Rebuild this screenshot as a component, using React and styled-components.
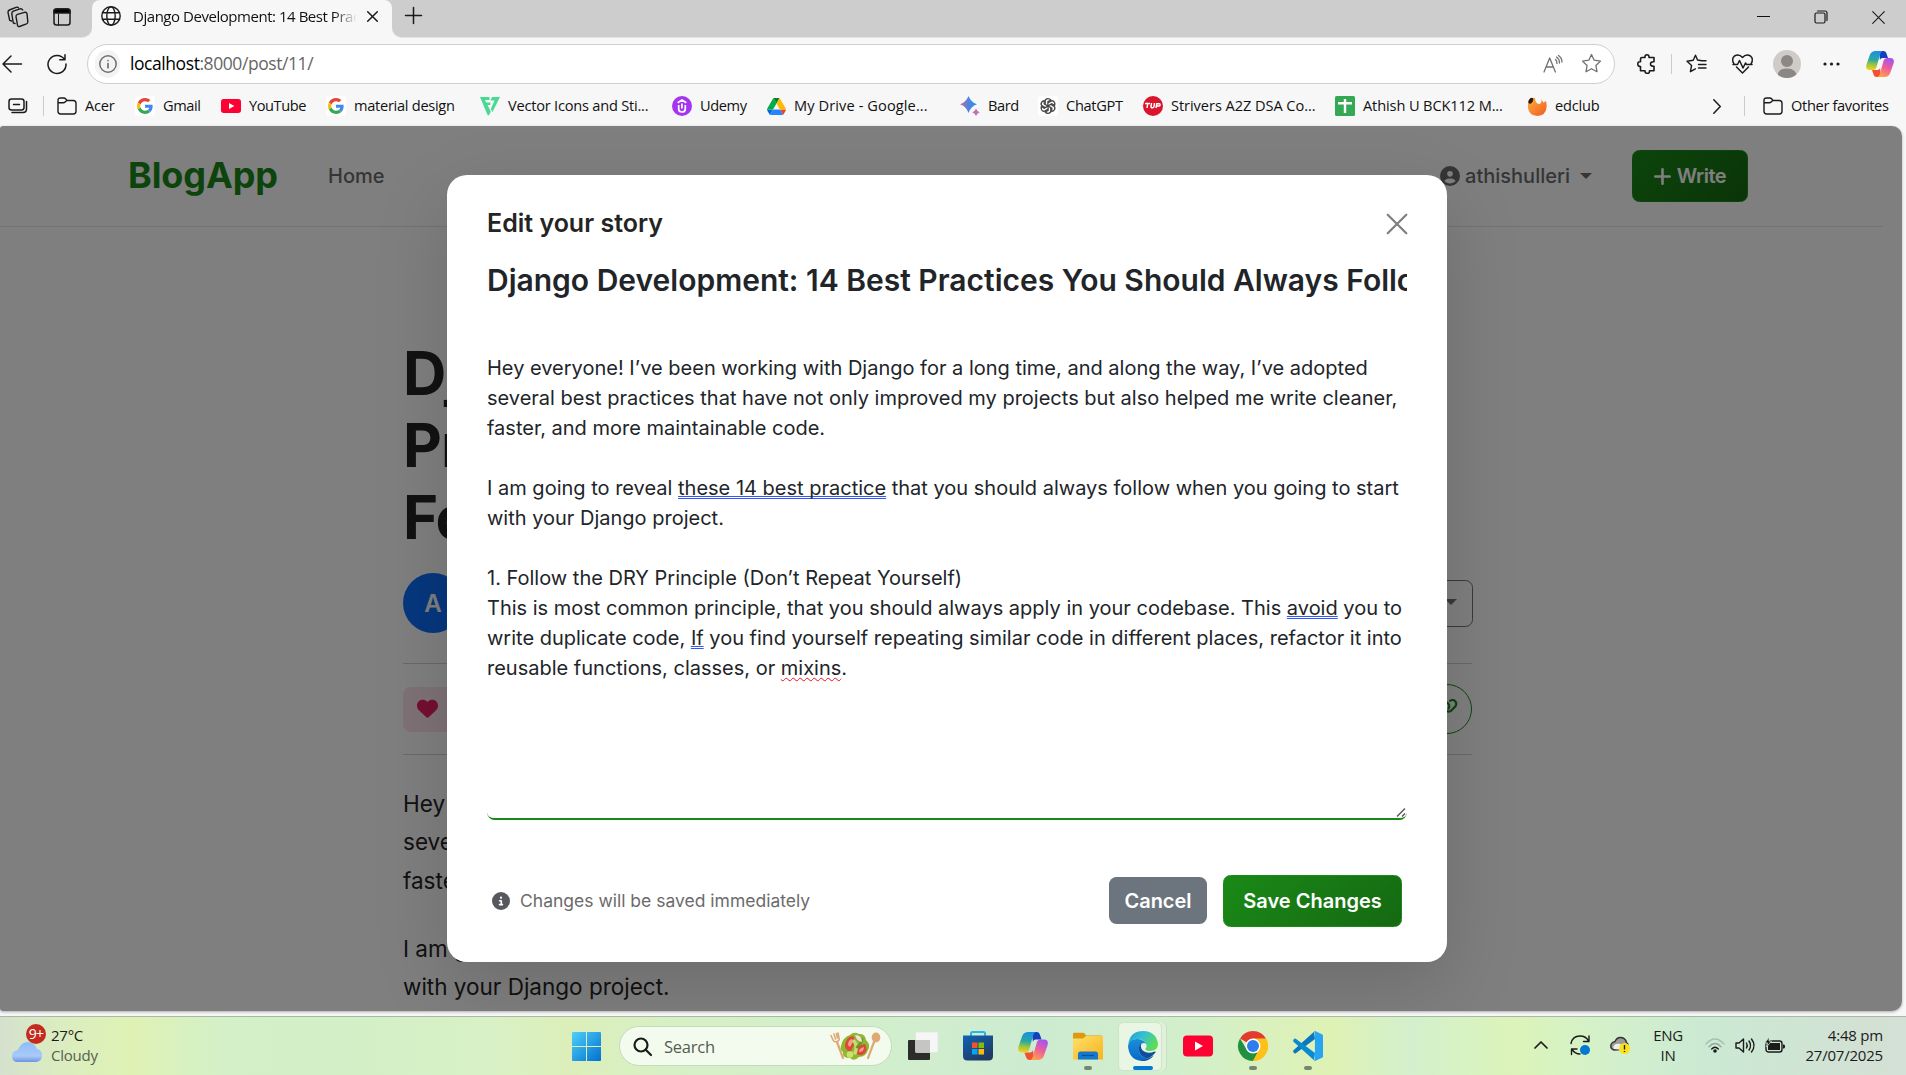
import React from "react";
import styled, { createGlobalStyle } from "styled-components";
import { FaCircleUser, FaHeart, FaLink, FaCircleInfo } from "react-icons/fa6";

const ui = `"Open Sans", "Noto Sans", sans-serif`;
const web = `Inter, "Liberation Sans", sans-serif`;

const GlobalStyle = createGlobalStyle`
  *, *::before, *::after { box-sizing: border-box; }
  html, body { margin: 0; padding: 0; overflow: hidden; }
  svg { display: block; flex: none; overflow: visible; }
  button { font: inherit; border: 0; margin: 0; padding: 0; }
  h1, h2, p { margin: 0; }
`;

/* ---------- window ---------- */
const Screen = styled.div`
  width: 1906px; height: 1075px; display: flex; flex-direction: column;
  background: #f7f7f7; font-family: ${ui}; color: #111; overflow: hidden;
`;
const TabStrip = styled.header`
  height: 38px; flex: none; display: flex; background: #cdcdcd;
`;
const StripLeft = styled.div`
  width: 92px; display: flex; align-items: center; gap: 24px; padding: 0 0 4px 7px;
  border-bottom-right-radius: 10px; background: #cdcdcd; border-bottom: 1px solid #e2e2e2;
`;
const TabWell = styled.div`
  flex: none; background: #f7f7f7; display: flex;
`;
const Tab = styled.div`
  width: 300px; height: 38px; display: flex; align-items: center; padding: 0 9px 6px 9px;
  background: #f7f7f7; border-radius: 8px 8px 0 0; box-shadow: 0 -8px 0 #cdcdcd;
`;
const TabTitle = styled.div`
  width: 226px; flex: none; margin: -1px 0 0 12px; font-size: 15px; letter-spacing: -0.46px; white-space: nowrap; overflow: hidden;
  mask-image: linear-gradient(90deg, #000 200px, transparent 224px);
`;
const StripRight = styled.div`
  flex: 1; display: flex; align-items: center; background: #cdcdcd; padding: 0 21px 6px 13px;
  border-bottom-left-radius: 10px; border-bottom: 1px solid #e2e2e2;
`;
const WindowButtons = styled.div`
  margin-left: auto; display: flex; gap: 44px; align-items: center; padding-top: 3px;
`;
const Back = styled.div`background: #f7f7f7; display: flex; flex: ${(p) => (p.$grow ? 1 : "none")};`;

const Toolbar = styled.div`
  height: 50px; flex: none; display: flex; align-items: center; padding-top: 1px;
`;
const Slot = styled.div`
  width: ${(p) => p.$w}px; flex: none; display: flex; justify-content: center; align-items: center;
`;
const Address = styled.div`
  width: 1528px; height: 40px; flex: none; display: flex; align-items: center; background: #fff;
  border: 1px solid #cfcfcf; border-radius: 20px; padding: 0 9px 0 7px;
`;
const InfoChip = styled.div`
  width: 25px; height: 28px; border-radius: 13px; background: #f3f3f3; display: flex; align-items: center; justify-content: center;
`;
const Url = styled.div`
  margin: -2px 0 0 10px; flex: 1; font-size: 17.5px; letter-spacing: -0.43px; color: #666; white-space: nowrap;
  b { font-weight: 400; color: #000; }
`;
const Divider = styled.i`
  display: block; width: 1px; height: 20px; background: #cbcbcb; flex: none;
`;
const Avatar = styled.div`
  width: 28px; height: 28px; flex: none; border-radius: 50%; overflow: hidden; background: #cfccc8;
`;
const Bookmarks = styled.nav`
  height: 38px; flex: none; display: flex; align-items: center; padding-bottom: 2px;
  font-size: 14.6px; letter-spacing: -0.4px; white-space: nowrap;
`;
const Bookmark = styled.div`
  width: ${(p) => p.$w}px; flex: none; display: flex; align-items: center; gap: 8px;
  span { letter-spacing: ${(p) => p.$ls ?? -0.4}px; margin-top: -2px; }
`;

/* ---------- page ---------- */
const ViewFrame = styled.main`
  height: 890px; flex: none; background: #f7f7f7; padding-right: 4px;
`;
const View = styled.div`
  position: relative; height: 885px; background: #fff; overflow: hidden; border-radius: 3px 10px 10px 3px;
  box-shadow: 0 1px 3px rgba(0,0,0,.3); font-family: ${web}; color: #242424;
`;
const NavBar = styled.div`
  width: 1883px; height: 101px; border-bottom: 1px solid #e6e6e6; display: flex; align-items: center;
  padding: 0 135px 0 128px; font-size: 20px; font-weight: 500; color: #6b6b6b;
`;
const Brand = styled.div`
  width: 200px; margin-top: -2px; font-size: 36px; font-weight: 700; letter-spacing: -0.1px; color: #1a8917;
`;
const UserMenu = styled.div`
  margin-left: auto; display: flex; align-items: center; gap: 5px;
`;
const Caret = styled.i`
  display: block; border: 6px solid transparent; border-top-color: currentColor; border-bottom: 0; margin-left: ${(p) => p.$ml || 0}px;
`;
const GreenButton = styled.button`
  width: ${(p) => p.$w}px; height: 52px; border-radius: 7.5px; border: 1px solid #1a8917;
  background: linear-gradient(135deg, #1a8917, #156912); color: #fff; font-weight: 600; font-size: 20px;
  letter-spacing: ${(p) => p.$ls || 0}px; margin-left: ${(p) => p.$ml || 0}px; white-space: nowrap;
  display: flex; align-items: center; justify-content: center; gap: 6px;
`;
const Article = styled.article`
  width: 1069px; margin: 110px 0 0 403px;
`;
const Headline = styled.h1`
  font-size: 60px; line-height: 72px; font-weight: 700; letter-spacing: -1px; color: #242424;
`;
const Byline = styled.div`
  margin-top: 20px; height: 60px; display: flex; justify-content: space-between; align-items: center;
`;
const Initial = styled.div`
  width: 60px; height: 60px; border-radius: 50%; background: #0d6efd; color: #fff; font-weight: 600; font-size: 24px;
  display: flex; align-items: center; justify-content: center;
`;
const MoreButton = styled.div`
  width: 71px; height: 47px; border: 1px solid #6c757d; border-radius: 7.5px; color: #6c757d;
  display: flex; align-items: center; justify-content: flex-end; padding-right: 15px; padding-bottom: 4px; margin: 1px -1px 0 0;
`;
const Actions = styled.div`
  margin-top: 30px; height: 92px; border-top: 1px solid #d2d2d2; border-bottom: 1px solid #d2d2d2;
  display: flex; align-items: center; justify-content: space-between;
`;
const Like = styled.div`
  width: 92px; height: 45px; border-radius: 7.5px; background: #fce4ec; color: #e91e63; padding-left: 14px;
  display: flex; align-items: center; padding-bottom: 1px;
`;
const Share = styled.div`
  width: 50px; height: 50px; border-radius: 50%; border: 1px solid #1a8917; color: #1a8917;
  display: flex; align-items: center; justify-content: center; padding-bottom: 4px;
`;
const Prose = styled.div`
  width: 1069px; margin-top: 30px; font-size: 22.5px; line-height: 38.25px;
  p { margin-bottom: 30px; }
`;
const Backdrop = styled.div`
  position: absolute; inset: 0; background: rgba(0,0,0,.5); padding-top: 49px; display: flex; justify-content: center;
  align-items: flex-start; padding-right: 8px;
`;
const Dialog = styled.section`
  width: 1000px; height: 787px; background: #fff; border-radius: 20px; box-shadow: 0 25px 75px rgba(0,0,0,.15);
  padding: 0 40px; display: flex; flex-direction: column;
`;
const DialogHead = styled.div`
  height: 67px; padding-top: 30px; display: flex; align-items: center; justify-content: space-between;
`;
const DialogTitle = styled.h2`
  margin-top: -2px; font-size: 25px; line-height: 38px; font-weight: 600; color: #242424;
`;
const TitleField = styled.div`
  height: 45px; margin-top: 16px; font-size: 30px; line-height: 45px; font-weight: 600; color: #212529; white-space: nowrap; overflow: hidden;
`;
const StoryField = styled.div`
  position: relative; height: 502px; margin-top: 15px; padding-top: 35px; border: solid transparent; border-width: 0 0 2px; border-bottom-color: #1a8917;
  border-radius: 7.5px; font-size: 20px; line-height: 30px; color: #212529; white-space: pre;
`;
const Grammar = styled.span`
  text-decoration: underline double #3355ff 1px; text-underline-offset: 1px; text-decoration-skip-ink: none;
`;
const Spelling = styled.span`
  text-decoration: underline wavy #e81123 1.4px; text-underline-offset: 2px; text-decoration-skip-ink: none;
`;
const Grip = styled.svg`position: absolute; right: 1px; bottom: 0;`;
const DialogFoot = styled.div`
  height: 52px; margin-top: 55px; padding: 0 5px; display: flex; align-items: center;
`;
const Note = styled.div`
  flex: 1; display: flex; align-items: center; gap: 10px; font-size: 17.5px; color: #6b6b6b; margin-top: -1px;
  svg { color: #55595d; }
`;
const CancelButton = styled.button`
  width: 98px; height: 47px; margin-top: -1px; border-radius: 7.5px; background: #6c757d; color: #fff; font-size: 20px; font-weight: 600;
`;

/* ---------- taskbar ---------- */
const Taskbar = styled.footer`
  height: 59px; flex: none; border-top: 1px solid #a9b8a2; display: flex; align-items: center; color: #1b1b1b; font-size: 15px;
  background: linear-gradient(90deg, #d5e1ce 0, #dbedc0 60px, #dff2b4 130px, #d3f0c8 225px, #d2efc7 330px, #d8f1c6 480px, #dcefba 570px,
    #d6f0c6 680px, #d2efcc 850px, #cdebd0 1040px, #d2efcc 1180px, #dff2b4 1330px, #d3f0cd 1410px, #dcf4b9 1515px, #d3f0cb 1610px, #cbe9d3 1710px, #d2e1d4 1860px, #d4e0d5 1906px);
`;
const Weather = styled.div`
  width: 572px; padding-left: 12px; display: flex; align-items: center; gap: 9px; line-height: 20px; letter-spacing: -0.25px; padding-bottom: 2px;
`;
const Muted = styled.div`color: #55604f;`;
const WeatherIcon = styled.div`position: relative; width: 30px; height: 38px; padding-top: 16px;`;
const Badge = styled.div`
  position: absolute; left: 14px; top: -2px; width: 20px; height: 20px; border-radius: 50%; background: #c42b1c; color: #fff;
  font-size: 14px; line-height: 19px; text-align: center; letter-spacing: -0.8px;
`;
const SearchBox = styled.div`
  width: 273px; height: 40px; margin: 0 3px 0 18px; border-radius: 20px; background: #f3fbef; border: 1px solid #c3dcba; display: flex; align-items: center;
  padding: 0 10px 0 13px; font-size: 16.5px; color: #555b52; letter-spacing: -0.25px;
  span { flex: 1; margin-left: 12px; }
`;
const Pinned = styled.div`
  width: 55px; height: 58px; position: relative; display: flex; align-items: center; justify-content: center;
`;
const PinnedIcon = styled.div`position: relative;`;
const Dot = styled.i`
  position: absolute; bottom: 5px; width: ${(p) => (p.$on ? 20 : 8)}px; height: 4px; border-radius: 2px; background: ${(p) => (p.$on ? "#0078d4" : "#76876f")};
`;
const ActiveBack = styled.div`
  position: absolute; left: 3px; top: 5px; width: 44px; height: 49px; border-radius: 5px; background: #e8f6e3; border: 1px solid #cfe3ca; box-shadow: 4px 0 0 #dff1d9, 5px 0 0 #c9dfc3;
`;
const Tray = styled.div`
  flex: 1; display: flex; align-items: center; justify-content: flex-end; padding-right: 23px; padding-bottom: 2px;
`;
const TwoLine = styled.div`
  width: ${(p) => p.$w}px; line-height: 20px; text-align: ${(p) => p.$a}; letter-spacing: ${(p) => p.$ls}px; white-space: nowrap; margin-top: -1px;
`;

/* ---------- drawings ---------- */
const line = { fill: "none", stroke: "#1b1b1b", strokeWidth: 1.5, strokeLinecap: "round", strokeLinejoin: "round" };

const Workspaces = () => (
  <svg width="22" height="22" viewBox="0 0 22 22" {...line} strokeWidth="1.4">
    <path d="M10.500 8.300 17.500 6.300q2-.5 2.500 1.300l.8 8q.2 1.700-1.300 2.300l-7 2.600q-1.700.5-2-1.300L9 10.600Q8.800 8.900 10.500 8.300Z" />
    <path d="M8 17.500 6.300 17 4.800 8Q4.700 6 6.300 5.200L13 2.800q1.800-.5 2.700 1.200M4.500 15 2.700 14.300 1 6.700Q.8 4.800 2.400 4L9 1.300q1.600-.5 2.500.4" />
  </svg>
);
const VerticalTabs = () => (
  <svg width="18" height="18" viewBox="0 0 18 18" {...line}>
    <rect x="1" y="1" width="16" height="16" rx="2.500" /><path d="M1 5V3.500Q1 1 3.500 1h11Q17 1 17 3.500V5Z" fill="#000" /><path d="M5.500 6v11" strokeWidth="1" />
  </svg>
);
const Globe = () => (
  <svg width="20" height="20" viewBox="0 0 20 20" {...line} strokeWidth="1.4">
    <circle cx="10" cy="10" r="9.200" /><ellipse cx="10" cy="10" rx="4.200" ry="9.200" /><path d="M1.500 6.800h17M1.500 13.200h17" />
  </svg>
);
const Cross = ({ s = 11, c = "#1b1b1b", w = 1.5 }) => (
  <svg width={s} height={s} viewBox={`0 0 ${s} ${s}`} stroke={c} strokeWidth={w} strokeLinecap="round"><path d={`M.7 .7 ${s - 0.7} ${s - 0.7}M${s - 0.7} .7 .7 ${s - 0.7}`} /></svg>
);
const Plus = () => (
  <svg width="17" height="17" viewBox="0 0 17 17" stroke="currentColor" strokeWidth="2.600" strokeLinecap="round"><path d="M8.500 1.300v14.400M1.300 8.500h14.400" /></svg>
);
const Folder = () => (
  <svg width="20" height="20" viewBox="0 0 20 20" {...line} strokeWidth="1.4">
    <path d="M1 4.500Q1 2 3.500 2h3Q8 2 8.800 3l1.400 1.500h6Q19 4.500 19 7.300v8Q19 18 16.300 18H3.700Q1 18 1 15.300Z M1 6.800h5.400q1 0 1.700-.7L9.800 4.500" />
  </svg>
);
const Google = () => (
  <svg width="20" height="20" viewBox="0 0 20 20"><rect width="20" height="20" rx="3" fill="#fff" />
    <g transform="translate(2 2) scale(.333)">
      <path fill="#ea4335" d="M24 9.500c3.540 0 6.710 1.220 9.210 3.600l6.850-6.850C35.900 2.380 30.470 0 24 0 14.620 0 6.510 5.380 2.560 13.220l7.980 6.190C12.430 13.720 17.740 9.500 24 9.500z" />
      <path fill="#4285f4" d="M46.980 24.550c0-1.570-.15-3.090-.38-4.550H24v9.020h12.940c-.58 2.960-2.260 5.480-4.780 7.180l7.730 6c4.510-4.180 7.090-10.360 7.090-17.650z" />
      <path fill="#fbbc05" d="M10.530 28.590c-.48-1.450-.76-2.990-.76-4.590s.27-3.140.76-4.590l-7.980-6.190C.92 16.460 0 20.120 0 24c0 3.880.92 7.540 2.560 10.780l7.970-6.190z" />
      <path fill="#34a853" d="M24 48c6.480 0 11.930-2.130 15.890-5.810l-7.730-6c-2.150 1.450-4.920 2.300-8.160 2.300-6.260 0-11.570-4.220-13.470-9.910l-7.980 6.190C6.510 42.620 14.620 48 24 48z" />
    </g>
  </svg>
);
const YouTube = ({ w = 20, h = 14 }) => (
  <svg width={w} height={h} viewBox="0 0 30 21"><rect width="30" height="21" rx="4" fill="#ff0033" /><path d="M12 6v9l8-4.500Z" fill="#fff" /></svg>
);
const VectorMark = () => (
  <svg width="20" height="20" viewBox="0 0 20 20" fill="#49d993"><path d="M0 1h9.500v3H5l1.300 2.500h4V9H7.500l3.300 6.500-1.300 3L8 19.500Q7 18 6.500 16.500ZM12 1h8l-7.500 15-1.700-3 3.700-8.500h-4Z" /></svg>
);
const Udemy = () => (
  <svg width="20" height="20" viewBox="0 0 20 20"><circle cx="10" cy="10" r="10" fill="#a435f0" />
    <path d="M6.700 9v4q0 3 3.300 3t3.300-3V9M5.700 6.800 10 4l4.300 2.800M9.900 7.500v5" fill="none" stroke="#fff" strokeWidth="1.700" /></svg>
);
const Drive = () => (
  <svg width="19" height="17" viewBox="0 0 87.300 78">
    <path d="m6.600 66.850 3.850 6.650c.8 1.400 1.950 2.500 3.300 3.300l13.750-23.800h-27.500c0 1.550.4 3.100 1.200 4.500z" fill="#0066da" />
    <path d="m43.650 25-13.750-23.800c-1.350.8-2.500 1.900-3.300 3.300l-25.400 44a9.060 9.060 0 0 0 -1.200 4.500h27.500z" fill="#00ac47" />
    <path d="m73.550 76.800c1.350-.8 2.500-1.900 3.300-3.300l1.600-2.750 7.650-13.250c.8-1.400 1.200-2.950 1.200-4.500h-27.502l5.852 11.500z" fill="#ea4335" />
    <path d="m43.650 25 13.750-23.800c-1.350-.8-2.900-1.200-4.500-1.200h-18.500c-1.600 0-3.150.45-4.500 1.200z" fill="#00832d" />
    <path d="m59.800 53h-32.300l-13.750 23.800c1.350.8 2.900 1.200 4.500 1.200h50.800c1.600 0 3.150-.45 4.500-1.200z" fill="#2684fc" />
    <path d="m73.400 26.500-12.700-22c-.8-1.400-1.950-2.500-3.300-3.300l-13.750 23.800 16.150 28h27.450c0-1.550-.4-3.100-1.200-4.500z" fill="#ffba00" />
  </svg>
);
const Bard = () => (
  <svg width="20" height="20" viewBox="0 0 20 20">
    <defs><linearGradient id="bard" x1="0" y1="0" x2="1" y2="0"><stop offset="0" stopColor="#d6668a" /><stop offset=".5" stopColor="#4a86e0" /><stop offset="1" stopColor="#3b8be8" /></linearGradient></defs>
    <path d="M8.500 0Q10.800 6 17 8.300 10.800 10.500 8.500 17 6.200 10.500 0 8.300 6.200 6 8.500 0Z" fill="url(#bard)" /><path d="M16 12.500q.9 2.700 3.700 3.700-2.800 1-3.700 3.800-.9-2.800-3.700-3.800 2.800-1 3.700-3.700Z" fill="#c070b0" />
  </svg>
);
const ChatGPT = () => (
  <svg width="20" height="20" viewBox="0 0 20 20"><rect width="20" height="20" rx="3" fill="#fff" />
    <g fill="none" stroke="#444" strokeWidth="1.300" transform="translate(10 10)">
      {[0, 60, 120, 180, 240, 300].map((a) => <path key={a} transform={`rotate(${a})`} d="M-2.800-1.700V-5Q-2.600-7.400 0-7.400 1.800-7.400 2.800-6L-.1-4.300V.3" />)}
    </g></svg>
);
const Striver = () => (
  <svg width="20" height="20" viewBox="0 0 20 20"><circle cx="10" cy="10" r="10" fill="#d9142d" />
    <g fill="none" stroke="#fff" strokeWidth="1.500"><path d="M2 7.500h5M4.700 7.500 4 12M8.500 7 8 10.500q0 1.500 1.500 1.300 1.300 0 1.500-1.300L11.500 7M13 12l.8-4.300h2.500q1 .2.800 1.300-.3 1-1.300 1h-2" /></g></svg>
);
const Sheets = () => (
  <svg width="20" height="20" viewBox="0 0 20 20"><rect width="20" height="20" rx="1.500" fill="#34a853" /><path d="M3 7.300h14M10 3v14" stroke="#fff" strokeWidth="2.400" /></svg>
);
const Edclub = () => (
  <svg width="20" height="20" viewBox="0 0 20 20">
    <defs><linearGradient id="edc" x1="0" y1="0" x2="1" y2="1"><stop offset="0" stopColor="#fbb03b" /><stop offset="1" stopColor="#f15a24" /></linearGradient></defs>
    <path d="M2 4q3-3 6-2 .5 6 4.500 6 2.500-1 2-5 1 3 2 3.500L19 5q1 4 .5 7-1 7.500-9 8Q2 19.500 1 12 .5 8 2 4Z" fill="url(#edc)" /><ellipse cx="3.800" cy="4.800" rx="2" ry="3.200" transform="rotate(30 3.800 4.800)" fill="#2c1a12" /></svg>
);
const Copilot = ({ s = 28 }) => (
  <svg width={s} height={s} viewBox="0 0 28 28">
    <defs>
      <linearGradient id="cpa" x1=".4" y1="0" x2=".3" y2="1"><stop offset="0" stopColor="#1b8fe8" /><stop offset=".45" stopColor="#2aa8a0" /><stop offset=".75" stopColor="#a8c838" /><stop offset="1" stopColor="#f5d020" /></linearGradient>
      <linearGradient id="cpb" x1=".7" y1="0" x2=".3" y2="1"><stop offset="0" stopColor="#a552f0" /><stop offset=".5" stopColor="#ee5f9a" /><stop offset="1" stopColor="#ffa04a" /></linearGradient>
    </defs>
    <path d="M13 1h4.500Q19.600 1 20.300 3l1.700 5h-5.500q-2 0-2.600 2Z" fill="#1440c0" />
    <path d="M15 27h-4.500Q8.400 27 7.700 25L6 20h5.500q2 0 2.600-2Z" fill="#f0522f" />
    <path d="M9.500 1H17q-2 .3-2.700 2.600L10.500 17q-.8 3-3.700 3H4Q-.8 20 .3 15L4 4.500Q5.500 1 9.500 1Z" fill="url(#cpa)" />
    <path d="M18.500 27H11q2-.3 2.700-2.600L17.500 11q.8-3 3.700-3H24q4.800 0 3.700 5L24 23.500Q22.500 27 18.500 27Z" fill="url(#cpb)" />
  </svg>
);
const Star = ({ c = "#1b1b1b" }) => (
  <svg width="21" height="21" viewBox="0 0 21 21" {...line} stroke={c} strokeWidth="1.300"><path d="m10.500 1.500 2.700 5.700 6.300.9-4.600 4.400 1.100 6.200-5.500-3-5.500 3 1.100-6.200L1.500 8.100l6.300-.9Z" /></svg>
);
const Salad = () => (
  <svg width="51" height="28" viewBox="0 0 51 28">
    <g fill="none" stroke="#dfa973" strokeLinecap="round"><path d="M7 10 13 26" strokeWidth="2.200" /><path d="M44 10 38 26" strokeWidth="2.200" /><path d="M1 3.500 3 8q1 2.500 4 1.500T9 6L8 1M4 2l1.500 5M6.500 1.500 7.500 6" strokeWidth="1.600" /></g>
    <ellipse cx="46" cy="5.500" rx="4.300" ry="5" fill="#dfa973" />
    <path d="M11 14Q13 5 20 3 24-1 29 2q6-1 7 6 5 5 2 10-2 7-9 7-5 5-9 1-8 0-7-6-3-2-2-6Z" fill="#8fb82f" />
    <path d="M15 15Q15 5 23 4l3 5-5 10q-4 1-6-4Z" fill="#dc4a3a" /><path d="M27 22q-2-3 1-8l7-2q3 5 0 9-4 4-8 1Z" fill="#dc4a3a" /><path d="M18 13q0-5 4-6l1 3-3 5Z" fill="#f2a18c" /><path d="M29 20q0-4 5-5 0 5-5 5Z" fill="#f2a18c" />
    <path d="M24 9q4 5 1 12" stroke="#c3de74" strokeWidth="3.500" fill="none" strokeLinecap="round" /><path d="M32 7q0 4-5 8" stroke="#6d9a1e" strokeWidth="2.500" fill="none" strokeLinecap="round" /><path d="M25 3q7 0 7 7-5 0-7-7Z" fill="#f0dfe8" /><circle cx="20" cy="22.500" r="3.300" fill="#c9e36d" />
  </svg>
);
const Edge = () => (
  <svg width="30" height="30" viewBox="0 0 30 30">
    <defs><linearGradient id="eg1" x1="0" y1="0" x2="1" y2=".5"><stop offset="0" stopColor="#1a9fdc" /><stop offset=".5" stopColor="#35c1d0" /><stop offset="1" stopColor="#5ddc56" /></linearGradient>
      <linearGradient id="eg2" x1="0" y1="0" x2="0" y2="1"><stop offset="0" stopColor="#1b8ed8" /><stop offset="1" stopColor="#0869c6" /></linearGradient></defs>
    <path d="M.3 13Q2 0 15.500 0 28 .5 30 12.500 30 20 22 20q-5 0-4.500-2.500 1.700-1.500.8-4Q16 8 10 8 3 8 .3 13Z" fill="url(#eg1)" />
    <path d="M0 15Q1 8 9 8q7 0 9.300 5.500-1.300-1.700-3.300-1.300-5 1-4 7.800 1.500 7 9 7.500Q17 30 14 30 1 29 0 15Z" fill="url(#eg2)" />
    <path d="M13.500 12.500Q10 14 11 20q1.500 7 9 7.500 4-1.500 7.500-6 .5-1.200-.8-.9Q18 24 13.500 18 12 15 13.500 12.500Z" fill="#0c4f9e" />
    <path d="M12.500 29.900Q20 31 26 24.500l-6 3Z" fill="#0c4f9e" />
  </svg>
);
const Chrome = () => (
  <svg width="30" height="30" viewBox="0 0 30 30">
    <path d="M15 15 2 7.500A15 15 0 0 1 28 7.500Z" fill="#e33b2e" /><path d="M15 15 28 7.500A15 15 0 0 1 15 30Z" fill="#fdc118" /><path d="M15 30A15 15 0 0 1 2 7.500l6.700 11Q11 22 15 22l4.500-.5Z" fill="#21913f" />
    <path d="M15 7.500h13A15 15 0 0 1 15 30l6.500-11.200Z" fill="#fdc118" /><circle cx="15" cy="15" r="7.500" fill="#fff" /><circle cx="15" cy="15" r="6" fill="#2f7ded" />
  </svg>
);
const Code = () => (
  <svg width="30" height="30" viewBox="0 0 30 30">
    <path d="M22 8 2.800 22.200Q1.800 22.700 1 22L.3 21Q-.2 20 .5 19.200L21 .8Z" fill="#0b78bd" /><path d="M22 22 2.800 7.800Q1.800 7.300 1 8L.3 9Q-.2 10 .5 10.800L21 29.200Z" fill="#0a8ad2" />
    <path d="M21 .5 22 0l7 3.200q1 .5 1 1.600v20.400q0 1.100-1 1.600L22 30l-1-.8.9-1.200V2Z" fill="#27a5f2" />
  </svg>
);
const Store = () => (
  <svg width="30" height="30" viewBox="0 0 30 30">
    <defs><linearGradient id="st" x1="0" y1="0" x2=".6" y2="1"><stop offset="0" stopColor="#0f63b5" /><stop offset="1" stopColor="#213a63" /></linearGradient></defs>
    <path d="M8 7V2.500Q8 1 9.500 1h11Q22 1 22 2.500V7" fill="none" stroke="#27b5ee" strokeWidth="2" /><path d="M0 4.500h30V25q0 4.500-4.500 4.500h-21Q0 29.500 0 25Z" fill="url(#st)" />
    <path d="M9 11.500h5.500V17H9Z" fill="#f35325" /><path d="M15.500 11.500H21V17h-5.500Z" fill="#81bc06" /><path d="M9 18h5.500v5.500H9Z" fill="#05a6f0" /><path d="M15.500 18H21v5.500h-5.500Z" fill="#ffba08" />
  </svg>
);
const Files = () => (
  <svg width="30" height="28" viewBox="0 0 30 28">
    <defs><linearGradient id="fo" x1="0" y1="0" x2="1" y2="1"><stop offset="0" stopColor="#ffdf6b" /><stop offset="1" stopColor="#f8b41a" /></linearGradient></defs>
    <path d="M0 8V2Q0 .7 1.500.7h8.500q1 0 1.700.8L13 3.500h15q1.500 0 1.500 1.500v4Z" fill="#dc9a10" /><path d="M0 6.500h10L13 4h17v23.500H0Z" fill="url(#fo)" />
    <path d="M5 27.500V22q0-2.500 2.500-2.500h15Q25 19.500 25 22v5.500Z" fill="#1379d0" /><path d="M9 23.500h12" stroke="#0a4f90" strokeWidth="1.200" /></svg>
);
const TaskView = () => (
  <svg width="30" height="28" viewBox="0 0 30 28">
    <rect x="0" y="8" width="22" height="20" rx="1" fill="#2c2c2a" /><rect x="7.500" y="0" width="22.500" height="20.500" rx="1" fill="#f6f6f6" stroke="#dfe4dc" strokeWidth=".6" /><rect x="7.500" y="8" width="14.500" height="12.500" fill="#c5c5c3" /></svg>
);
const Start = () => (
  <svg width="29" height="29" viewBox="0 0 29 29">
    <defs><linearGradient id="win" gradientUnits="userSpaceOnUse" x1="0" y1="0" x2="29" y2="29"><stop offset="0" stopColor="#4fd0fb" /><stop offset="1" stopColor="#0270cf" /></linearGradient></defs>
    <path d="M1 0h13v14H0V1Q0 0 1 0ZM15 0h13q1 0 1 1v13H15ZM0 15h14v14H1q-1 0-1-1ZM15 15h14v13q0 1-1 1H15Z" fill="url(#win)" /></svg>
);
const Cloud = () => (
  <svg width="30" height="20" viewBox="0 0 30 20">
    <defs><linearGradient id="cl" x1="0" y1="0" x2="0" y2="1"><stop offset="0" stopColor="#8ebcf8" /><stop offset=".7" stopColor="#a8caf8" /><stop offset="1" stopColor="#6d93e2" /></linearGradient></defs>
    <path d="M6 20q-6 0-6-6 0-5 6-6Q9 0 16 0q7 1 9 7 5 1 5 6.500T24 20Z" fill="url(#cl)" /></svg>
);

const bookmarks = [
  ["Acer", 78, Folder, -0.25], ["Gmail", 86, Google], ["YouTube", 105, YouTube, -0.44], ["material design", 154, Google, -0.28],
  ["Vector Icons and Sti...", 192, VectorMark, -0.22], ["Udemy", 95, Udemy], ["My Drive - Google...", 193, Drive, 0.1], ["Bard", 78, Bard],
  ["ChatGPT", 105, ChatGPT, -0.3], ["Strivers A2Z DSA Co...", 192, Striver, -0.06], ["Athish U BCK112 M...", 192, Sheets, -0.12], ["edclub", 166, Edclub, -0.2],
];
const pinned = [
  { I: TaskView }, { I: Store }, { I: Copilot }, { I: Files, open: true }, { I: Edge, open: true, on: true },
  { I: () => <YouTube w={30} h={22} /> }, { I: Chrome, open: true }, { I: Code, open: true },
];

export default function App() {
  return (
    <Screen>
      <GlobalStyle />
      <TabStrip>
        <Back><StripLeft><Workspaces /><VerticalTabs /></StripLeft></Back>
        <TabWell><Tab><Globe /><TabTitle>Django Development: 14 Best Practices</TabTitle><Slot $w={27}><Cross /></Slot></Tab></TabWell>
        <Back $grow><StripRight>
          <svg width="17" height="17" viewBox="0 0 17 17" {...line}><path d="M8.500 .5v16M.5 8.500h16" /></svg>
          <WindowButtons>
            <svg width="13" height="13" viewBox="0 0 13 13" stroke="#111"><path d="M0 5.500h13" /></svg>
            <svg width="14" height="14" viewBox="0 0 14 14" {...line} strokeWidth="1.200"><rect x="1" y="3" width="10" height="10" rx="1.500" /><path d="M3.500 1H11q2 0 2 2v7.500" /></svg>
            <Cross s={13} w={1.1} />
          </WindowButtons>
        </StripRight></Back>
      </TabStrip>

      <Toolbar>
        <Slot $w={24}><svg width="20" height="18" viewBox="0 0 20 18" {...line}><path d="M9 1 1 9l8 8M1 9h18.500" /></svg></Slot>
        <Slot $w={3} />
        <Slot $w={60}><svg width="20" height="20" viewBox="0 0 20 20" {...line}><path d="M17.500 5.500A9 9 0 1 0 19 10M18 .8v5h-5.200" /></svg></Slot>
        <Address>
          <InfoChip><svg width="18" height="18" viewBox="0 0 18 18" {...line} stroke="#707070"><circle cx="9" cy="9" r="8.200" /><path d="M9 8.500v4.200M9 5.500v.1" strokeWidth="1.700" /></svg></InfoChip>
          <Url><b>localhost</b>:8000/post/11/</Url>
          <Slot $w={48}><svg width="20" height="18" viewBox="0 0 20 18" {...line} stroke="#707070" strokeWidth="1.300"><path d="M1 17 6.700 3l5.700 14M3 12h7.500M12.500 4.500q1.500 1.500 1.500 4M13.500 2Q16.500 4 16.500 8M15.500.5Q19 3 19 7" /></svg></Slot>
          <Slot $w={28}><Star c="#707070" /></Slot>
        </Address>
        <Slot $w={31} />
        <Slot $w={1}><svg width="19" height="20" viewBox="0 0 19 20" {...line} strokeWidth="1.600"><path d="M5 3.500h3q-.3-2.700 2-2.700t2 2.700h5v4.300q-3.500-.2-3.500 2.200t3.500 2.300v4.500h-4.500q.2 2.500-2.200 2.500T8 16.800H3.500v-4.300Q.8 12.500.8 10t2.700-2.300V5q0-1.500 1.500-1.500Z" /></svg></Slot>
        <Slot $w={48}><Divider /></Slot>
        <Slot $w={3}><svg width="21" height="20" viewBox="0 0 21 20" {...line}><path d="M15.800 6.800 11.500 6 9.500 1.200 7.200 6.300 1 7.200l4.600 4.300-1.200 6.200 5-2.800M12.500 10.500H20M12.500 14H20M15 6.800h5" strokeWidth="1.400" /></svg></Slot>
        <Slot $w={88}><svg width="21" height="20" viewBox="0 0 21 20" {...line}><path d="M2 10Q-1 5 2.500 2 7-.5 10.500 3.500 14-.5 18.500 2 22 5 19 10M4.500 13l6 6 6-6M1 10.500h4.500l2-4 3.500 7.500 2.500-5 1 1.500H20" /></svg></Slot>
        <Slot $w={2}><Avatar><svg width="28" height="28" viewBox="0 0 28 28" fill="#8a8784"><circle cx="14" cy="11" r="6" /><path d="M4 28Q4 18.500 14 18.500T24 28Z" /></svg></Avatar></Slot>
        <Slot $w={87}><svg width="17" height="4" viewBox="0 0 17 4" fill="#1b1b1b"><circle cx="2" cy="2" r="1.600" /><circle cx="8.500" cy="2" r="1.600" /><circle cx="15" cy="2" r="1.600" /></svg></Slot>
        <Slot $w={9}><Copilot /></Slot>
      </Toolbar>

      <Bookmarks>
        <Slot $w={35}><svg width="20" height="16" viewBox="0 0 20 16" {...line}><rect x="1" y="1" width="15" height="11" rx="2.500" /><path d="M18.500 3.500V11q0 3.500-3.500 3.500H4M5.500 6.500h6" /></svg></Slot>
        <Slot $w={17}><Divider /></Slot>
        <Slot $w={5} />
        {bookmarks.map(([t, w, I, ls]) => <Bookmark key={t} $w={w} $ls={ls}><I /><span>{t}</span></Bookmark>)}
        <Slot $w={47}><svg width="8" height="15" viewBox="0 0 8 15" {...line}><path d="m.8.800 6.500 6.700L.8 14.200" /></svg></Slot>
        <Slot $w={8}><Divider /></Slot>
        <Slot $w={15} />
        <Bookmark $w={130} $ls={-0.33}><Folder /><span>Other favorites</span></Bookmark>
      </Bookmarks>

      <ViewFrame>
        <View>
          <NavBar>
            <Brand>BlogApp</Brand>
            <span>Home</span>
            <UserMenu><FaCircleUser size={20} /><span>athishulleri</span><Caret $ml={5} /></UserMenu>
            <GreenButton $w={116} $ml={40} $ls={-0.5}><Plus />Write</GreenButton>
          </NavBar>
          <Article>
            <Headline>Django Development: 14 Best<br />Practices You Should Always<br />Follow</Headline>
            <Byline><Initial>A</Initial><MoreButton><Caret /></MoreButton></Byline>
            <Actions><Like><FaHeart size={21} /></Like><Share><FaLink size={22} /></Share></Actions>
            <Prose>
              <p>Hey everyone! I’ve been working with Django for a long time, and along the way, I’ve adopted<br />several best practices that have not only improved my projects but also helped me write cleaner,<br />faster, and more maintainable code.</p>
              <p>I am going to reveal these 14 best practice that you should always follow when you going to start<br />with your Django project.</p>
            </Prose>
          </Article>
          <Backdrop>
            <Dialog>
              <DialogHead><DialogTitle>Edit your story</DialogTitle><Cross s={20} c="#7f7f7f" w={2.2} /></DialogHead>
              <TitleField>Django Development: 14 Best Practices You Should Always Follow</TitleField>
              <StoryField>
                {"Hey everyone! I’ve been working with Django for a long time, and along the way, I’ve adopted\nseveral best practices that have not only improved my projects but also helped me write cleaner,\nfaster, and more maintainable code.\n\nI am going to reveal "}
                <Grammar>these 14 best practice</Grammar>
                {" that you should always follow when you going to start\nwith your Django project.\n\n1. Follow the DRY Principle (Don’t Repeat Yourself)\nThis is most common principle, that you should always apply in your codebase. This "}
                <Grammar>avoid</Grammar>{" you to\nwrite duplicate code, "}<Grammar>If</Grammar>
                {" you find yourself repeating similar code in different places, refactor it into\nreusable functions, classes, or "}<Spelling>mixins</Spelling>.
                <Grip width="10" height="10" viewBox="0 0 10 10" stroke="#555" strokeWidth="1.400"><path d="M1 8.500 9 .5M6 8.500 9 5.500" /></Grip>
              </StoryField>
              <DialogFoot>
                <Note><FaCircleInfo size={18} /><span>Changes will be saved immediately</span></Note>
                <CancelButton>Cancel</CancelButton>
                <GreenButton $w={179} $ml={16}>Save Changes</GreenButton>
              </DialogFoot>
            </Dialog>
          </Backdrop>
        </View>
      </ViewFrame>

      <Taskbar>
        <Weather><WeatherIcon><Cloud /><Badge>9+</Badge></WeatherIcon><div><div>27°C</div><Muted>Cloudy</Muted></div></Weather>
        <Start />
        <SearchBox><svg width="19" height="19" viewBox="0 0 19 19" {...line} strokeWidth="2.200"><circle cx="8" cy="8" r="6.500" /><path d="m13 13 5 5" /></svg><span>Search</span><Salad /></SearchBox>
        {pinned.map(({ I, open, on }, i) => <Pinned key={i}>{on && <ActiveBack />}<PinnedIcon><I s={30} /></PinnedIcon>{open && <Dot $on={on} />}</Pinned>)}
        <Tray>
          <Slot $w={39}><svg width="14" height="8" viewBox="0 0 14 8" {...line} strokeWidth="1.700"><path d="m1 7 6-6 6 6" /></svg></Slot>
          <Slot $w={39}><svg width="20" height="20" viewBox="0 0 20 20" {...line} strokeWidth="1.400"><path d="M1 8.500Q2.500 1 10 1q6 0 8.500 5M19 1v5.500h-5.500M1.500 19.500v-5.500H7M2 14.500Q5 19 10 19" /><circle cx="15" cy="15" r="5" fill="#0078d4" stroke="none" /></svg></Slot>
          <Slot $w={42}><svg width="20" height="18" viewBox="0 0 20 18"><path d="M4 14Q0 13 1 8.500 2 6 5 5.500 7 1 11 1.500q4.500.5 5.500 5Q19 8 18 13Z" fill="#9b9b99" stroke="#333" strokeWidth="1.400" /><path d="M4 13q-2-3 2-5 4-1 9 2l-2 4Z" fill="#eee" /><circle cx="14.500" cy="12.500" r="5.500" fill="#fbe21c" /><path d="M14.500 9v4.500M14.500 15v1" stroke="#222" strokeWidth="1.400" /></svg></Slot>
          <Slot $w={7} />
          <TwoLine $w={40} $a="center" $ls={-0.3}>ENG<br />IN</TwoLine>
          <Slot $w={54}><svg width="20" height="15" viewBox="0 0 20 15" fill="none" strokeWidth="1.400" strokeLinecap="round"><path d="M1 6q9-10 18 0" stroke="#a9bfae" /><path d="M4 8.700q6-6.500 12 0" stroke="#94a898" /><path d="M6.700 11q3.300-3.500 6.600 0" stroke="#1b1b1b" /><circle cx="10" cy="13" r="1.800" fill="#1b1b1b" /></svg></Slot>
          <Slot $w={6}><svg width="20" height="17" viewBox="0 0 20 17" {...line} strokeWidth="1.400"><path d="M1 6v5h3l4.500 4V2L4 6ZM11.500 6q1.500 2.500 0 5M14 4q3 4.500 0 9M16.500 2q5 6.500 0 13" /></svg></Slot>
          <Slot $w={54}><svg width="20" height="16" viewBox="0 0 20 16"><rect x="1" y="4" width="16" height="11" rx="2.500" fill="none" stroke="#1b1b1b" strokeWidth="1.400" /><rect x="3" y="6" width="12" height="7" fill="#1b1b1b" /><path d="M18 7.500h1q1 0 1 2t-1 2h-1Z" fill="#1b1b1b" /><path d="M4 0 0 6h2.500L1.500 10 6.500 4H4Z" fill="#1b1b1b" stroke="#cfe9d5" strokeWidth=".8" /></svg></Slot>
          <TwoLine $w={81} $a="right" $ls={-0.2}>4:48 pm<br />27/07/2025</TwoLine>
        </Tray>
      </Taskbar>
    </Screen>
  );
}
